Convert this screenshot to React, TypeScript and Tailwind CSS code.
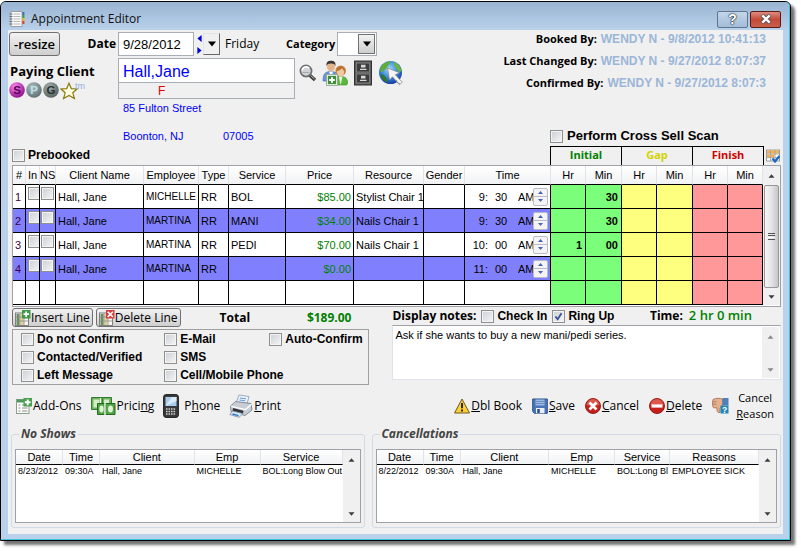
import React from 'react';

const SANS = "font-['Open_Sans','Noto_Sans',sans-serif]";

function Check({ id, label, checked = false }: { id: string; label?: string; checked?: boolean }) {
  return (
    <span className="inline-grid size-[13px] shrink-0">
      <input
        id={id}
        type="checkbox"
        defaultChecked={checked}
        aria-label={label}
        className="peer [grid-area:1/1] size-[13px] appearance-none border border-[#8e8f8f] bg-linear-to-br from-[#cbcfd5] to-[#f6f6f6] outline outline-1 -outline-offset-2 outline-[#f4f4f4]"
      />
      <svg viewBox="0 0 13 13" className="pointer-events-none hidden [grid-area:1/1] size-[13px] peer-checked:block" aria-hidden="true">
        <path d="M3.5 6.5 L5.7 9.3 L9.5 3.2" fill="none" stroke="#3b4f96" strokeWidth="1.8" />
      </svg>
    </span>
  );
}

function LabeledCheck({ id, text, checked, big }: { id: string; text: string; checked?: boolean; big?: boolean }) {
  return (
    <div className="flex items-center gap-[3px]">
      <Check id={id} checked={checked} />
      <label htmlFor={id} className={big ? 'pl-px text-[13px] leading-4 font-bold' : 'text-xs leading-4 font-bold'}>
        {text}
      </label>
    </div>
  );
}

function Tri({ dir, className }: { dir: 'up' | 'down' | 'left' | 'right'; className: string }) {
  const d = {
    up: 'M0 8 L5 2 L10 8 Z',
    down: 'M0 2 L10 2 L5 8 Z',
    left: 'M8 0 L8 10 L2 5 Z',
    right: 'M2 0 L2 10 L8 5 Z',
  }[dir];
  return (
    <svg viewBox="0 0 10 10" className={className} aria-hidden="true">
      <path d={d} fill="currentColor" />
    </svg>
  );
}

function ScrollBar({ thumb = false, muted = false }: { thumb?: boolean; muted?: boolean }) {
  const tone = muted ? 'text-[#8a8a8a]' : 'text-[#3c3c3c]';
  return (
    <div className="flex w-[17px] shrink-0 flex-col bg-[#f0f0f0]">
      <button type="button" aria-label="Scroll up" className={`flex h-[19px] items-center justify-center ${tone}`}>
        <Tri dir="up" className="h-[6px] w-[7px]" />
      </button>
      <div className="min-h-0 flex-1">
        {thumb && (
          <div className="mx-px flex h-full flex-col items-center justify-center gap-px rounded-[2px] border border-[#979797] bg-linear-to-r from-[#f6f6f6] via-[#e4e4e6] to-[#c6c6ca]">
            <i className="h-px w-[7px] bg-[#555]" />
            <i className="h-px w-[7px] bg-[#555]" />
            <i className="h-px w-[7px] bg-white" />
            <i className="h-px w-[7px] bg-[#555]" />
          </div>
        )}
      </div>
      <button type="button" aria-label="Scroll down" className={`flex h-[17px] items-center justify-center ${tone}`}>
        <Tri dir="down" className="h-[6px] w-[7px]" />
      </button>
    </div>
  );
}

/* ---------- icons ---------- */

const NotebookIcon = () => (
  <svg viewBox="0 0 16 16" className="size-4" aria-hidden="true">
    <path d="M2 .5h11v15H2z" fill="#fbfbfb" stroke="#8d8d8d" strokeWidth=".8" />
    <path d="M4.5 3h7M4.5 5.5h7M4.5 8h7M4.5 10.5h7M4.5 13h7" stroke="#b5b5b5" />
    <path d="M.5 3h3M.5 5.5h3M.5 8h3M.5 10.5h3M.5 13h3" stroke="#666" strokeWidth=".9" />
    <path d="M13.4 1h2v3h-2z" fill="#3a6fc0" />
    <path d="M13.4 4h2v3h-2z" fill="#37a24a" />
    <path d="M13.4 7h2v3h-2z" fill="#f0b428" />
    <path d="M13.4 10h2v3h-2z" fill="#d9402e" />
  </svg>
);

const Ball = ({ letter, from, to, ink }: { letter: string; from: string; to: string; ink: string }) => (
  <svg viewBox="0 0 16 16" className="size-4" aria-hidden="true">
    <defs>
      <radialGradient id={`ball-${letter}`} cx=".38" cy=".3" r=".75">
        <stop offset="0" stopColor={from} />
        <stop offset="1" stopColor={to} />
      </radialGradient>
    </defs>
    <circle cx="8" cy="8" r="7.8" fill={`url(#ball-${letter})`} />
    <text x="8" y="12.2" textAnchor="middle" fontFamily="Liberation Sans" fontWeight="bold" fontSize="11.5" fill={ink}>
      {letter}
    </text>
  </svg>
);

const StarIcon = () => (
  <svg viewBox="0 0 18 18" className="size-[18px]" aria-hidden="true">
    <path d="M9 1.2 11.3 6.6 17 7 12.8 10.8 14.4 16.6 9 13.4 3.6 16.6 5.2 10.8 1 7 6.7 6.6Z" fill="#fffde0" stroke="#8a7a10" strokeWidth="1.2" />
  </svg>
);

const MagnifierIcon = () => (
  <svg viewBox="0 0 18 18" className="size-[18px]" aria-hidden="true">
    <path d="M10.5 11 L16 16" stroke="#3a3a3a" strokeWidth="3.4" />
    <path d="M11.5 11.5 L15.5 15" stroke="#bdbdbd" strokeWidth="1" />
    <circle cx="7" cy="7" r="5.6" fill="#cfd3d6" stroke="#6e6e6e" strokeWidth="1.7" />
    <path d="M3.2 6.5a4 4 0 0 1 7-2.3" fill="none" stroke="#fff" strokeWidth="1.7" />
    <path d="M3.5 8.5h7" stroke="#a4a9ad" strokeWidth="1" />
  </svg>
);

const PeopleIcon = () => (
  <svg viewBox="0 0 26 26" className="size-[26px]" aria-hidden="true">
    <path d="M1 21c0-7 2-9.5 8-9.5s8 3 8 9.5z" fill="#6d95dc" stroke="#4266a8" strokeWidth=".6" />
    <path d="M7 11.5 9 17l2.2-5.5z" fill="#fff" />
    <ellipse cx="9" cy="6.5" rx="4" ry="5" fill="#e3b48a" />
    <path d="M4.6 6.2C4 2 6 .8 9 .8s5 1.2 4.4 5.4c-.6-2-1.6-2.7-4.4-2.7s-3.8.7-4.4 2.7z" fill="#3b3531" />
    <path d="M12 25c0-6 2-8.5 6.8-8.5S25.6 19 25.6 23c0 1.400-1 2-2 2z" fill="#5cb83e" stroke="#338a20" strokeWidth=".6" />
    <path d="M16.8 16.5 18.6 25l2-8.500z" fill="#e8f5e0" />
    <circle cx="18.700" cy="10.700" r="5.300" fill="#c98645" />
    <ellipse cx="18.500" cy="12.300" rx="3.500" ry="4.200" fill="#f0c9a0" />
    <path d="M14.500 11c2 0 4.500-1 5.500-3 1 1.500 1.500 2.500 3 3-.5-3.500-2-4.700-4.400-4.700S14.700 7.800 14.500 11z" fill="#b8702f" />
    <rect x="4.500" y="14.500" width="11" height="11" fill="#fff" stroke="#8aa08a" strokeWidth=".8" />
    <rect x="5.800" y="15.800" width="8.400" height="8.400" fill="#3f8f3a" />
    <path d="M10 17.200v5.600M7.200 20h5.600" stroke="#fff" strokeWidth="2" />
  </svg>
);

const CabinetIcon = () => (
  <svg viewBox="0 0 20 26" className="h-[26px] w-5" aria-hidden="true">
    <rect x="1.500" y="1" width="17" height="24" fill="#5a5a5a" stroke="#333" />
    <rect x="3.300" y="3" width="13.400" height="9" fill="#3c3c3c" stroke="#8e8e8e" strokeWidth=".8" />
    <rect x="3.300" y="14" width="13.400" height="9" fill="#3c3c3c" stroke="#8e8e8e" strokeWidth=".8" />
    <path d="M8 4.800h4.500v2.600H8zM8 15.800h4.500v2.600H8z" fill="#d8d8d8" />
    <path d="M7 9.300h6.500M7 20.300h6.500" stroke="#d8d8d8" strokeWidth="1.300" />
  </svg>
);

const GlobeIcon = () => (
  <svg viewBox="0 0 26 26" className="size-[26px]" aria-hidden="true">
    <defs>
      <radialGradient id="sea" cx=".45" cy=".35" r=".7">
        <stop offset="0" stopColor="#a9dcff" />
        <stop offset=".5" stopColor="#3c8be0" />
        <stop offset="1" stopColor="#12309a" />
      </radialGradient>
    </defs>
    <circle cx="12.500" cy="12.500" r="11.500" fill="url(#sea)" />
    <path d="M3 6.500C6 2.500 9.500 1.200 13 1.200c-1 3-3 3.500-4 6.300-1 2-3.500 2.500-5.500 5C1.800 11 2 8.500 3 6.500z" fill="#5fae3a" />
    <path d="M16 2c4 1.500 7 5 7.700 9-2 1.500-4 1-4.700-2-1.500-1.500-3.500-3-3-7z" fill="#69b840" />
    <path d="M3 14c3 .5 6 3 6.500 8.500C5.500 21.500 2.500 17.500 3 14z" fill="#2f7a26" />
    <path d="M9.500 8 11.500 20l3-3.200 7 8 2.800-2.600-7-7.500 4.200-2z" fill="#f4f4f4" stroke="#8b8b8b" strokeWidth=".8" />
    <path d="M18 20.500 22 24.500" stroke="#777" strokeWidth="1.200" strokeDasharray="1 1" />
  </svg>
);

const CalendarTick = () => (
  <svg viewBox="0 0 14 14" className="size-[14px]" aria-hidden="true">
    <rect x=".5" y="1" width="13" height="11" fill="#fff" stroke="#9c9c9c" />
    <path d="M1 1.500h12v3H1zM1 5.500h3v3H1zM5 5.500h3.500v3H5z" fill="#f3b04c" />
    <path d="M4.500 1v11M9 1v11M1 5h12M1 8.700h12" stroke="#9c9c9c" strokeWidth=".8" />
    <path d="M6.500 9.500 9 12.500 13.500 7" fill="none" stroke="#1b66c9" strokeWidth="2.200" />
  </svg>
);

const GridIcon = ({ kind }: { kind: 'plus' | 'cross' }) => (
  <svg viewBox="0 0 16 16" className="size-4" aria-hidden="true">
    <rect x=".5" y="3" width="13" height="12.500" fill="#f6f6f6" stroke="#777" strokeWidth=".9" />
    <path d="M1.500 4h3v11h-3z" fill="#6b8e5e" />
    <path d="M5.500 4h3v11h-3z" fill="#e5cf8c" />
    <path d="M5 3v12M9 3v12M1 7h12M1 11h12" stroke="#8b8b8b" strokeWidth=".8" />
    {kind === 'plus' ? (
      <g>
        <rect x="7" y="0" width="8.500" height="8.500" fill="#3e9a46" />
        <path d="M11.200 1.500v5.500M8.500 4.200H14" stroke="#fff" strokeWidth="1.800" />
      </g>
    ) : (
      <g>
        <rect x="7" y="0" width="8.500" height="8.500" fill="#d63a3a" />
        <path d="M8.700 1.700l5.200 5.200M13.900 1.700 8.700 6.900" stroke="#fff" strokeWidth="1.600" />
      </g>
    )}
  </svg>
);

const AddOnIcon = () => (
  <svg viewBox="0 0 16 16" className="size-4" aria-hidden="true">
    <rect x=".5" y="1.500" width="12.500" height="14" fill="#fff" stroke="#8aa08a" />
    <path d="M1 1.500h12v3H1z" fill="#4b9a58" />
    <path d="M2.500 7h2M6 7h5.500M2.500 10h2M6 10h5.500M2.500 13h2M6 13h5.500" stroke="#8c8c8c" />
    <rect x="7.500" y="0" width="8.500" height="8.500" fill="#49a04e" />
    <path d="M11.700 1.400v5.800M8.800 4.300h5.800" stroke="#fff" strokeWidth="2" />
  </svg>
);

const MoneyIcon = () => (
  <svg viewBox="0 0 25 20" className="h-5 w-[25px]" aria-hidden="true">
    <path d="M.5 1.500h11v12H.5zM11.500 1.500h9v12h-9z" fill="#6db45c" stroke="#2f7d2d" />
    <path d="M2.500 3.500h6v8h-6zM13 3.500h5v6h-5z" fill="#d5ecc8" />
    <path d="M9.500 2v11" stroke="#fff" />
    <path d="M6.500 7.500h8v11h-8zM14.500 7.500h9.500v11h-9.500z" fill="#51a343" stroke="#226b22" />
    <ellipse cx="10.500" cy="13" rx="2.200" ry="3.400" fill="#dff2d4" />
    <ellipse cx="19.500" cy="13" rx="2.500" ry="3.400" fill="#dff2d4" />
    <path d="M14 7v12" stroke="#fff" strokeWidth="1.300" />
  </svg>
);

const PhoneIcon = () => (
  <svg viewBox="0 0 16 24" className="h-6 w-4" aria-hidden="true">
    <rect x=".6" y=".6" width="14.800" height="22.800" rx="2.500" fill="#3a3a3a" stroke="#1d1d1d" />
    <rect x="2.500" y="3" width="11" height="9" fill="#a9cdf0" />
    <path d="M2.500 12 9 3h4.500v4z" fill="#dcebf8" />
    <path d="M3 15h10M3 17.500h10M3 20h10" stroke="#cfcfcf" strokeWidth="1.300" strokeDasharray="1.600 .9" />
  </svg>
);

const PrinterIcon = () => (
  <svg viewBox="0 0 24 24" className="size-6" aria-hidden="true">
    <path d="M10 1 20 2.500 18 10 7 9z" fill="#eaf2fb" stroke="#8b9bb0" strokeWidth=".8" />
    <path d="M11 4l6 .8M10.300 6l6 .8" stroke="#6c9bd6" strokeWidth="1" />
    <path d="M1.500 12 6.500 7.500 22 9.500 23 16 16 21.500 2 17.500z" fill="#c9ced6" stroke="#6f7681" strokeWidth=".8" />
    <path d="M2 12.300 16.500 15.500 22.500 10.200" fill="none" stroke="#fff" strokeWidth="1.200" />
    <path d="M4 14 14.500 16.700 14 20 3.500 17z" fill="#2f343c" />
    <path d="M3.500 17 14 19.600 10 23.300 .8 20.500z" fill="#dce9f7" stroke="#7a8798" strokeWidth=".8" />
    <path d="M3.500 20 9.500 21.600" stroke="#2d76cf" strokeWidth="1.400" />
  </svg>
);

const WarningIcon = () => (
  <svg viewBox="0 0 16 16" className="size-4" aria-hidden="true">
    <path d="M8 1 15.500 15H.5z" fill="#fbcf35" stroke="#6d5a20" strokeLinejoin="round" />
    <path d="M8 5v5.200M8 11.500v2" stroke="#222" strokeWidth="1.900" />
  </svg>
);

const SaveIcon = () => (
  <svg viewBox="0 0 16 16" className="size-4" aria-hidden="true">
    <path d="M.7 1h14.600v14.300H2.500L.7 13.500z" fill="#4a76b8" stroke="#28508f" />
    <path d="M3.500 1.500h9v6h-9z" fill="#9db8e0" />
    <path d="M3.500 3.500h9M3.500 5.500h9" stroke="#5e86c2" strokeWidth=".8" />
    <path d="M4 10h8.500v5.300H4z" fill="#e9edf4" />
    <path d="M5.200 11h2.600v4H5.200z" fill="#28508f" />
  </svg>
);

const RoundRed = ({ kind }: { kind: 'x' | 'bar' }) => (
  <svg viewBox="0 0 16 16" className="size-4" aria-hidden="true">
    <circle cx="8" cy="8" r="7.500" fill="#c6201c" stroke="#8d1310" strokeWidth=".9" />
    <path d="M1.500 7A6.500 6 0 0 1 14.500 7Q8 9 1.500 7z" fill="#e36a5c" opacity=".75" />
    {kind === 'x' ? (
      <path d="M4.500 4.500l7 7M11.500 4.500l-7 7" stroke="#fff" strokeWidth="2.700" />
    ) : (
      <path d="M2.500 8h11" stroke="#fff" strokeWidth="3.200" />
    )}
  </svg>
);

const ThumbIcon = () => (
  <svg viewBox="0 0 17 17" className="size-[17px]" aria-hidden="true">
    <path d="M1 2.500C4 .7 8 1.200 10.500 2v7.500L8 11v4.500c-2 .5-3-.7-3-2.500v-2.200H1.600C.2 9.500.2 4.500 1 2.500z" fill="#e5b08f" stroke="#a4694a" strokeWidth=".8" />
    <path d="M1 4.700h3.500M1 7.200h3.500" stroke="#a4694a" strokeWidth=".7" />
    <path d="M10.500 1h6v7.500h-6z" fill="#4f7fb8" />
    <rect x="8.500" y="8.500" width="8" height="8" fill="#2387b5" />
    <text x="12.500" y="15.500" textAnchor="middle" fontFamily="Liberation Sans" fontWeight="bold" fontSize="8.500" fill="#fff">
      ?
    </text>
  </svg>
);

/* ---------- appointment lines ---------- */

type Line = {
  employee: string;
  service: string;
  price: string;
  resource: string;
  hour: string;
  minute: string;
  initHr: string;
  initMin: string;
};

const lines: Line[] = [
  { employee: 'MICHELLE', service: 'BOL', price: '$85.00', resource: 'Stylist Chair 1', hour: '9:', minute: '30', initHr: '', initMin: '30' },
  { employee: 'MARTINA', service: 'MANI', price: '$34.00', resource: 'Nails Chair 1', hour: '9:', minute: '30', initHr: '', initMin: '30' },
  { employee: 'MARTINA', service: 'PEDI', price: '$70.00', resource: 'Nails Chair 1', hour: '10:', minute: '00', initHr: '1', initMin: '00' },
  { employee: 'MARTINA', service: '', price: '$0.00', resource: '', hour: '11:', minute: '00', initHr: '', initMin: '' },
];

const heads = ['#', 'In', 'NS', 'Client Name', 'Employee', 'Type', 'Service', 'Price', 'Resource', 'Gender', 'Time', 'Hr', 'Min', 'Hr', 'Min', 'Hr', 'Min'];
const colWidths = [
  'w-[13px]', 'w-[14px]', 'w-[16px]', '', 'w-[55px]', 'w-[30px]', 'w-[57px]', 'w-[68px]', 'w-[70px]', 'w-[41px]', 'w-[86px]',
  'w-[35px]', 'w-[36px]', 'w-[35px]', 'w-[36px]', 'w-[35px]', 'w-[35px]',
];
const TD = 'h-6 overflow-hidden border-r border-b border-black p-0 pl-0.5 whitespace-nowrap';
const GREEN = 'bg-[#7bff7b] pr-[3px] text-right font-bold';
const YELLOW = 'bg-[#ffff7f]';
const RED = 'bg-[#ff9999]';

function LinesTable() {
  return (
    <div className="flex border border-[#a0a0a8] bg-white pb-px">
      <table className="w-full table-fixed border-separate border-spacing-0 self-start text-[11px] leading-4">
        <colgroup>
          {colWidths.map((w, i) => (
            <col key={i} className={w} />
          ))}
        </colgroup>
        <thead>
          <tr>
            {heads.map((h, i) => (
              <th key={i} className="h-[19px] border-r border-b border-r-[#e2e3e6] border-b-black bg-linear-to-b from-white to-[#f1f2f4] p-0 text-center font-normal whitespace-nowrap">
                {h}
              </th>
            ))}
          </tr>
        </thead>
        <tbody>
          {[...lines, null].map((l, i) => (
            <tr key={i} className={i % 2 ? 'bg-[#8080ff]' : 'bg-white'}>
              <td className={`${TD} text-[#400040]`}>{l && i + 1}</td>
              <td className={`${TD} pt-0.5 pl-0 align-top leading-none`}>{l && <Check id={`in-${i}`} label={`In, line ${i + 1}`} />}</td>
              <td className={`${TD} pt-0.5 pl-px align-top leading-none`}>{l && <Check id={`ns-${i}`} label={`NS, line ${i + 1}`} />}</td>
              <td className={TD}>{l && 'Hall, Jane'}</td>
              <td className={`${TD} text-[10px]`}>{l?.employee}</td>
              <td className={TD}>{l && 'RR'}</td>
              <td className={TD}>{l?.service}</td>
              <td className={`${TD} pr-0.5 text-right text-[#008000]`}>{l?.price}</td>
              <td className={TD}>{l?.resource}</td>
              <td className={TD} />
              <td className={TD}>
                {l && (
                  <div className="flex items-center">
                    <span className="w-[21px] text-right">{l.hour}</span>
                    <span className="w-[30px] pl-[7px]">{l.minute}</span>
                    <span className="w-[15px] overflow-hidden">AM</span>
                    <span className="flex flex-col rounded-[2px] border border-[#b8bcc6] bg-[#f4f4f6] text-[#4b64b0]">
                      <button type="button" aria-label="Later" className="flex h-2 w-[13px] items-center justify-center border-b border-[#b8bcc6]">
                        <Tri dir="up" className="size-[5px]" />
                      </button>
                      <button type="button" aria-label="Earlier" className="flex h-2 w-[13px] items-center justify-center">
                        <Tri dir="down" className="size-[5px]" />
                      </button>
                    </span>
                  </div>
                )}
              </td>
              <td className={`${TD} ${GREEN}`}>{l?.initHr}</td>
              <td className={`${TD} ${GREEN}`}>{l?.initMin}</td>
              <td className={`${TD} ${YELLOW}`} />
              <td className={`${TD} ${YELLOW}`} />
              <td className={`${TD} ${RED}`} />
              <td className={`${TD} ${RED}`} />
            </tr>
          ))}
        </tbody>
      </table>
      <ScrollBar thumb />
    </div>
  );
}

/* ---------- history lists ---------- */

type HistoryProps = { title: string; cols: string[]; widths: string[]; row: string[] };

function History({ title, cols, widths, row }: HistoryProps) {
  return (
    <fieldset className="min-w-0 rounded-[3px] border border-[#d0dbe6] px-[3px] pt-[7px] pb-1">
      <legend className={`${SANS} ml-1 px-0.5 text-xs leading-4 font-bold text-[#444] italic`}>{title}</legend>
      <div className="flex h-[74px] border border-[#a0a0a8] bg-white">
        <table className="w-full table-fixed border-separate border-spacing-0 self-start">
          <colgroup>
            {widths.map((w, i) => (
              <col key={i} className={w} />
            ))}
          </colgroup>
          <thead>
            <tr>
              {cols.map((c) => (
                <th key={c} className="h-[15px] border-r border-b border-r-[#e2e3e6] border-b-black bg-linear-to-b from-white to-[#f1f2f4] p-0 text-center text-[11px] leading-[14px] font-normal">
                  {c}
                </th>
              ))}
            </tr>
          </thead>
          <tbody>
            <tr>
              {row.map((c, i) => (
                <td key={i} className="h-3 overflow-hidden p-0 pl-0.5 text-[9px] leading-3 whitespace-nowrap">
                  {c}
                </td>
              ))}
            </tr>
          </tbody>
        </table>
        <ScrollBar />
      </div>
    </fieldset>
  );
}

function Tool({ icon, children }: { icon: React.ReactNode; children: React.ReactNode }) {
  return (
    <button type="button" className={`${SANS} flex items-center gap-px text-xs whitespace-nowrap`}>
      {icon}
      <span>{children}</span>
    </button>
  );
}

const stamps = [
  { label: 'Booked By:', value: 'WENDY N - 9/8/2012 10:41:13' },
  { label: 'Last Changed By:', value: 'WENDY N - 9/27/2012 8:07:37' },
  { label: 'Confirmed By:', value: 'WENDY N - 9/27/2012 8:07:3' },
];

const LINE_BTN = `${SANS} flex h-[19px] items-center rounded-[3px] border border-[#707070] bg-linear-to-b from-[#f2f2f2] to-[#cfcfcf] px-0.5 text-xs whitespace-nowrap`;
const FRAME_BTN = 'flex h-[17px] w-[31px] items-center justify-center rounded-[2px] border';

export default function App() {
  return (
    <div className="min-h-screen bg-white pt-px pr-[10px] pb-[10px] font-['Liberation_Sans',Arial,sans-serif] text-black">
      <main className="rounded-t-[6px] border border-black bg-[#b9d1ea] shadow-[4px_4px_3px_rgba(0,0,0,0.55)]">
        <div className="rounded-t-[5px] border-r border-b border-[#39c4de] pr-1.5 pb-[5px] pl-[7px]">
          <header className="-mr-1.5 -ml-[7px] flex h-7 items-center rounded-t-[5px] bg-linear-to-b from-[#9ab4d2] to-[#b9d1ea] pt-1.5 pr-2 pl-2">
            <NotebookIcon />
            <h1 className={`${SANS} flex-1 pl-1.5 text-xs text-[#111]`}>Appointment Editor</h1>
            <div className="flex gap-0.5">
              <button type="button" aria-label="Help" className={`${FRAME_BTN} border-[#5f7590] bg-linear-to-b from-[#c3d6ea] to-[#a3bcd8] text-sm leading-none font-bold text-white [text-shadow:0_0_2px_#000,0_0_1px_#000]`}>
                ?
              </button>
              <button type="button" aria-label="Close" className={`${FRAME_BTN} border-[#5a1a18] bg-linear-to-b from-[#dc8c7e] via-[#c44a38] to-[#c8604a]`}>
                <svg viewBox="0 0 12 10" className="h-2.5 w-3" aria-hidden="true">
                  <path d="M2 1l8 8M10 1l-8 8" stroke="#4a4a58" strokeWidth="4" />
                  <path d="M2.300 1.300l7.400 7.400M9.700 1.300l-7.400 7.400" stroke="#fff" strokeWidth="2.400" />
                </svg>
              </button>
            </div>
          </header>

          <div className="bg-[#f0f0f0] pr-0.5 pb-1.5 pl-px">
            <section className="flex h-[135px] justify-between">
              <div className="flex flex-col">
                <div className={`${SANS} flex h-7 items-center text-xs`}>
                  <div className="flex w-[109px] items-center justify-between pr-0.5">
                    <button type="button" className="h-6 w-[51px] rounded-[3px] border border-[#707070] bg-linear-to-b from-[#f2f2f2] to-[#cfcfcf] text-[13px] leading-5 font-semibold">
                      -resize
                    </button>
                    <label htmlFor="date" className="font-bold">Date</label>
                  </div>
                  <input id="date" defaultValue="9/28/2012" className="h-6 w-[76px] border border-[#a9adb5] bg-white pl-1 font-['Liberation_Sans'] text-[13px]" />
                  <div className="flex w-[9px] flex-col items-center gap-[5px] pl-px text-[#0000d8]">
                    <button type="button" aria-label="Previous day"><Tri dir="left" className="size-[7px]" /></button>
                    <button type="button" aria-label="Next day"><Tri dir="right" className="size-[7px]" /></button>
                  </div>
                  <button type="button" aria-label="Open calendar" className="flex h-[22px] w-[17px] items-center justify-center border border-t-[#e3e3e3] border-r-[#696969] border-b-[#696969] border-l-[#e3e3e3] bg-[#f0f0f0]">
                    <Tri dir="down" className="size-[8px]" />
                  </button>
                  <span className="w-[66px] pl-[5px]">Friday</span>
                  <label htmlFor="category" className="w-[51px] text-[11px] font-bold">Category</label>
                  <div className="inline-grid h-6 w-10">
                    <select id="category" className="[grid-area:1/1] appearance-none border border-[#a9adb5] bg-white">
                      <option value=""></option>
                    </select>
                    <span className="pointer-events-none [grid-area:1/1] m-0.5 flex w-[17px] items-center justify-center justify-self-end border border-[#707070] bg-linear-to-b from-[#f2f2f2] to-[#cfcfcf]">
                      <Tri dir="down" className="size-[8px]" />
                    </span>
                  </div>
                </div>

                <div className="flex">
                  <div className="w-[109px] pt-1">
                    <label htmlFor="client" className={`${SANS} block pl-px text-[13px] leading-[18px] font-bold whitespace-nowrap`}>
                      Paying Client
                    </label>
                    <div className="flex items-start gap-px pt-0.5">
                      <Ball letter="S" from="#ff8af0" to="#8a0a86" ink="#5a0058" />
                      <Ball letter="P" from="#a9bcbc" to="#5c6e70" ink="#bfe0ee" />
                      <Ball letter="G" from="#a2b0ac" to="#525f5d" ink="#26302e" />
                      <StarIcon />
                      <span className="-ml-1 text-[9px] leading-none text-[#8fb0d8]">tm</span>
                    </div>
                  </div>
                  <div className="flex w-[177px] flex-col">
                    <input id="client" defaultValue="Hall,Jane" className="h-[25px] border border-[#a9adb5] bg-white pt-0.5 pl-1 text-base text-[#0000ff]" />
                    <input aria-label="Gender" defaultValue="F" className="h-4 border border-t-0 border-[#a9adb5] bg-[#f0f0f0] pl-[39px] text-xs text-[#e00000]" />
                  </div>
                  <div className="flex h-[29px] items-center gap-[5px] pl-1">
                    <button type="button" aria-label="Find client"><MagnifierIcon /></button>
                    <button type="button" aria-label="Add client"><PeopleIcon /></button>
                    <button type="button" aria-label="Client file"><CabinetIcon /></button>
                    <button type="button" aria-label="Online"><GlobeIcon /></button>
                  </div>
                </div>

                <address className="pt-px pl-[114px] text-[11px] leading-[14px] text-[#0000ff] not-italic">
                  <div className="pb-3.5">85 Fulton Street</div>
                  <div className="flex"><span className="w-[100px]">Boonton, NJ</span><span>07005</span></div>
                </address>
                <div className="mt-auto pb-0.5 pl-[3px]">
                  <LabeledCheck id="prebooked" text="Prebooked" />
                </div>
              </div>

              <div className="flex flex-col items-end">
                <dl className="flex flex-col items-end pr-[15px] whitespace-nowrap">
                  {stamps.map((s) => (
                    <div key={s.label} className="flex h-[22px] items-start gap-1 leading-[18px]">
                      <dt className={`${SANS} text-[11px] font-bold`}>{s.label}</dt>
                      <dd className="text-xs leading-[18px] font-bold text-[#9bb6d8]">{s.value}</dd>
                    </div>
                  ))}
                </dl>
                <div className="mt-auto w-[231px]">
                  <div className="pb-0.5"><LabeledCheck id="cross" text="Perform Cross Sell Scan" big /></div>
                  <div className={`${SANS} flex h-[19px] items-center gap-0.5 text-[11px] font-bold`}>
                    <div className="grid h-full w-[214px] grid-cols-3 border-t border-r border-black text-center leading-4">
                      <span className="border-l border-black text-[#008000]">Initial</span>
                      <span className="border-l border-black text-[#d2d200]">Gap</span>
                      <span className="border-l border-black text-[#d00000]">Finish</span>
                    </div>
                    <CalendarTick />
                  </div>
                </div>
              </div>
            </section>

            <div className="pl-[3px]">
              <LinesTable />

              <section className="grid grid-cols-[357fr_388fr] gap-x-[23px]">
                <div>
                  <div className="flex h-[22px] items-center gap-[3px] pb-px">
                    <button type="button" className={LINE_BTN}><GridIcon kind="plus" />Insert Line</button>
                    <button type="button" className={LINE_BTN}><GridIcon kind="cross" />Delete Line</button>
                    <span className={`${SANS} ml-9 text-xs font-bold`}>Total</span>
                    <output className={`${SANS} mr-[18px] ml-auto text-xs font-bold text-[#008000]`}>$189.00</output>
                  </div>
                  <div className="grid grid-cols-[143fr_105fr_99fr] border border-[#a0a0a0] pl-2 leading-[18px] whitespace-nowrap">
                    <div className="flex h-[18px] items-center"><LabeledCheck id="dnc" text="Do not Confirm" /></div>
                    <div className="flex h-[18px] items-center"><LabeledCheck id="email" text="E-Mail" /></div>
                    <div className="flex h-[18px] items-center"><LabeledCheck id="auto" text="Auto-Confirm" /></div>
                    <div className="flex h-[18px] items-center"><LabeledCheck id="contacted" text="Contacted/Verified" /></div>
                    <div className="col-span-2 flex h-[18px] items-center"><LabeledCheck id="sms" text="SMS" /></div>
                    <div className="flex h-[18px] items-center"><LabeledCheck id="left" text="Left Message" /></div>
                    <div className="col-span-2 flex h-[18px] items-center"><LabeledCheck id="cell" text="Cell/Mobile Phone" /></div>
                  </div>
                </div>

                <div>
                  <div className="flex h-[18px] items-center gap-[5px] whitespace-nowrap">
                    <label htmlFor="notes" className={`${SANS} text-xs font-bold`}>Display notes:</label>
                    <LabeledCheck id="checkin" text="Check In" />
                    <LabeledCheck id="ringup" text="Ring Up" checked />
                    <span className={`${SANS} mr-[29px] ml-auto flex items-center gap-1.5 text-xs font-bold`}>
                      <span>Time:</span>
                      <span className="text-[13px] font-semibold text-[#008000]">2 hr 0 min</span>
                    </span>
                  </div>
                  <div className="flex h-[55px] border border-[#dfe2ea] border-t-[#a0a0a8] bg-white p-px">
                    <textarea id="notes" defaultValue="Ask if she wants to buy a new mani/pedi series." className="min-w-0 flex-1 resize-none overflow-hidden pl-px text-[11px] leading-4" />
                    <ScrollBar muted />
                  </div>
                </div>
              </section>
            </div>

            <nav className="flex h-[41px] items-center justify-between pr-[7px] pl-[7px]">
              <div className="flex items-center gap-[9px]">
                <Tool icon={<AddOnIcon />}>Add-Ons</Tool>
                <Tool icon={<MoneyIcon />}>Prici<u>n</u>g</Tool>
                <Tool icon={<PhoneIcon />}><span className="pl-1">P<u>h</u>one</span></Tool>
                <Tool icon={<PrinterIcon />}><u>P</u>rint</Tool>
              </div>
              <div className="flex items-center gap-2.5">
                <Tool icon={<WarningIcon />}><u>D</u>bl Book</Tool>
                <Tool icon={<SaveIcon />}><u>S</u>ave</Tool>
                <Tool icon={<RoundRed kind="x" />}><u>C</u>ancel</Tool>
                <Tool icon={<RoundRed kind="bar" />}><u>D</u>elete</Tool>
                <button type="button" className={`${SANS} flex items-center gap-[7px] text-[11px] leading-4`}>
                  <ThumbIcon />
                  <span>Cancel<br /><u>R</u>eason</span>
                </button>
              </div>
            </nav>

            <section className="grid grid-cols-[354fr_410fr] gap-x-[7px] pl-0.5">
              <History
                title="No Shows"
                cols={['Date', 'Time', 'Client', 'Emp', 'Service']}
                widths={['w-[47px]', 'w-[37px]', '', 'w-[66px]', 'w-[82px]']}
                row={['8/23/2012', '09:30A', 'Hall, Jane', 'MICHELLE', 'BOL:Long Blow Out']}
              />
              <History
                title="Cancellations"
                cols={['Date', 'Time', 'Client', 'Emp', 'Service', 'Reasons']}
                widths={['w-[47px]', 'w-[37px]', '', 'w-[66px]', 'w-[55px]', 'w-[89px]']}
                row={['8/22/2012', '09:30A', 'Hall, Jane', 'MICHELLE', 'BOL:Long Bl', 'EMPLOYEE SICK']}
              />
            </section>
          </div>
        </div>
      </main>
    </div>
  );
}
